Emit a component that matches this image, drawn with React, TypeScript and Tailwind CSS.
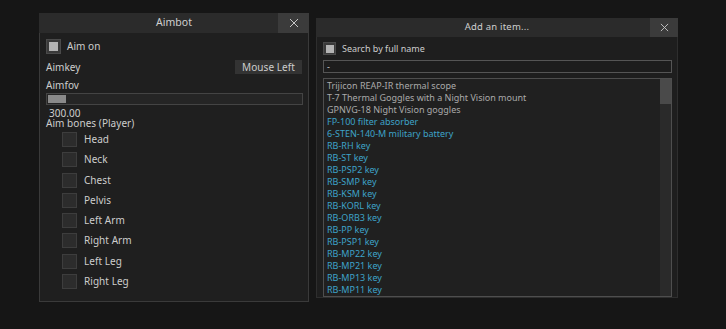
import React from "react";

const font = { fontFamily: '"Noto Sans", "Open Sans", sans-serif' };

function Box() {
  return <div className="w-[15px] h-[15px] bg-[#2c2c2c] border border-[#3d3d3d] shrink-0" />;
}

const bones = ["Head", "Neck", "Chest", "Pelvis", "Left Arm", "Right Arm", "Left Leg", "Right Leg"];

const items: [string, boolean][] = [
  ["Trijicon REAP-IR thermal scope", false],
  ["T-7 Thermal Goggles with a Night Vision mount", false],
  ["GPNVG-18 Night Vision goggles", false],
  ["FP-100 filter absorber", true],
  ["6-STEN-140-M military battery", true],
  ["RB-RH key", true],
  ["RB-ST key", true],
  ["RB-PSP2 key", true],
  ["RB-SMP key", true],
  ["RB-KSM key", true],
  ["RB-KORL key", true],
  ["RB-ORB3 key", true],
  ["RB-PP key", true],
  ["RB-PSP1 key", true],
  ["RB-MP22 key", true],
  ["RB-MP21 key", true],
  ["RB-MP13 key", true],
  ["RB-MP11 key", true],
];

function CloseX({ size }: { size: number }) {
  return (
    <svg width={size} height={size} viewBox="0 0 10 10">
      <path d="M1 1L9 9M9 1L1 9" stroke="#c8c8c8" strokeWidth="1" />
    </svg>
  );
}

export default function App() {
  return (
    <div className="w-[726px] h-[329px] bg-[#161616] flex items-start pl-[39px] pt-[13px] overflow-hidden" style={font}>
      {/* Aimbot window */}
      <div className="w-[270px] h-[289px] bg-[#1f1f1f] border border-[#3a3a3a] flex flex-col text-[10px] text-[#cdcdcd] tracking-[0.05px]">
        <div className="h-[20px] bg-[#2b2b2b] flex items-center relative shrink-0 -mx-px -mt-px">
          <div className="flex-1 text-center text-[10.5px] text-[#d0d0d0]">Aimbot</div>
          <div className="absolute right-0 top-0 h-[20px] w-[31px] bg-[#3b3b3b] flex items-center justify-center">
            <CloseX size={10} />
          </div>
        </div>
        <div className="flex flex-col pl-[6px] pr-[6px]">
          <div className="mt-[6px] h-[15px] flex items-center gap-[6px]">
            <div className="w-[15px] h-[15px] bg-[#3a3a3a] border border-[#4a4a4a] flex items-center justify-center">
              <div className="w-[9px] h-[9px] bg-[#b4b4b4]" />
            </div>
            <span>Aim on</span>
          </div>
          <div className="mt-[6px] h-[14px] flex items-center justify-between">
            <span>Aimkey</span>
            <div className="h-[14px] w-[67px] bg-[#333333] flex items-center justify-center">Mouse Left</div>
          </div>
          <div className="mt-[4px] h-[14px] flex items-center">Aimfov</div>
          <div className="mt-[1px] h-[12px] w-[257px] border border-[#444444] bg-[#252525] p-px flex">
            <div className="w-[18px] h-full bg-[#8a8a8a]" />
          </div>
          <div className="mt-[3px] h-[10px] leading-[10px] pl-[3px]">300.00</div>
          <div className="h-[10px] leading-[10px]">Aim bones (Player)</div>
          <div className="mt-[4px] flex flex-col gap-[5.3px] pl-[16px]">
            {bones.map((b) => (
              <div key={b} className="h-[15px] flex items-center gap-[7px]">
                <Box />
                <span>{b}</span>
              </div>
            ))}
          </div>
        </div>
      </div>

      {/* Add an item window */}
      <div className="ml-[7px] mt-[5px] w-[362px] h-[280px] bg-[#1e1e1e] border border-[#2e2e2e] flex flex-col text-[9px]">
        <div className="h-[19px] bg-[#2b2b2b] flex items-center relative shrink-0 -mx-px -mt-px">
          <div className="flex-1 text-center text-[9.5px] text-[#cfcfcf] tracking-[0.2px]">Add an item...</div>
          <div className="absolute right-0 top-0 h-[19px] w-[28px] bg-[#3b3b3b] flex items-center justify-center">
            <CloseX size={9} />
          </div>
        </div>
        <div className="flex flex-col pl-[6px] pr-[5px] flex-1 pb-[2px]">
          <div className="mt-[5px] h-[13px] flex items-center gap-[6px]">
            <div className="w-[13px] h-[13px] bg-[#3a3a3a] border border-[#4a4a4a] flex items-center justify-center">
              <div className="w-[8px] h-[8px] bg-[#b4b4b4]" />
            </div>
            <span className="text-[#cccccc]">Search by full name</span>
          </div>
          <div className="mt-[5px] h-[13px] border border-[#555555] bg-[#1d1d1d] flex items-center pl-[3px] text-[#cfcfcf]">-</div>
          <div className="mt-[5px] flex-1 border border-[#4e4e4e] bg-[#202020] flex overflow-hidden">
            <div className="flex-1 flex flex-col pl-[3px] pt-[1px]">
              {items.map(([t, blue]) => (
                <div key={t} className={"h-[12px] leading-[12px] whitespace-nowrap " + (blue ? "text-[#3ea3c8]" : "text-[#aaaaaa]")}>
                  {t}
                </div>
              ))}
            </div>
            <div className="w-[11px] bg-[#2a2a2a] flex flex-col">
              <div className="h-[25px] bg-[#4a4a4a]" />
            </div>
          </div>
        </div>
      </div>
    </div>
  );
}
